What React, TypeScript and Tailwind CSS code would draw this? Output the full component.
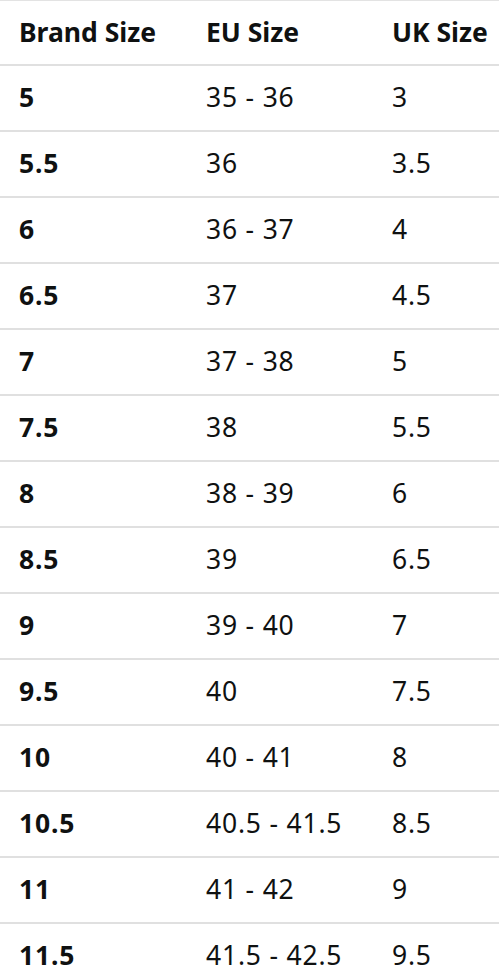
import React from "react";

const rows: [string, string, string][] = [
  ["5", "35 - 36", "3"],
  ["5.5", "36", "3.5"],
  ["6", "36 - 37", "4"],
  ["6.5", "37", "4.5"],
  ["7", "37 - 38", "5"],
  ["7.5", "38", "5.5"],
  ["8", "38 - 39", "6"],
  ["8.5", "39", "6.5"],
  ["9", "39 - 40", "7"],
  ["9.5", "40", "7.5"],
  ["10", "40 - 41", "8"],
  ["10.5", "40.5 - 41.5", "8.5"],
  ["11", "41 - 42", "9"],
  ["11.5", "41.5 - 42.5", "9.5"],
];

export default function App() {
  return (
    <div
      className="w-[499px] h-[980px] overflow-hidden bg-white text-[#0f1111]"
      style={{ fontFamily: '"Noto Sans", "Liberation Sans", sans-serif' }}
    >
      <div className="border-t border-[#e3e3e3]">
        <div className="grid grid-cols-[187px_186px_1fr] h-[65px] items-center border-b-2 border-[#e0e0e0] text-[26.5px] font-bold pl-[19px]">
          <div>Brand Size</div>
          <div>EU Size</div>
          <div>UK Size</div>
        </div>
        {rows.map(([b, eu, uk]) => (
          <div
            key={b}
            className="grid grid-cols-[187px_186px_1fr] h-[66px] items-center border-b-2 border-[#e0e0e0] text-[26.5px] tracking-[0.8px] pl-[19px]"
          >
            <div className="font-bold">{b}</div>
            <div>{eu}</div>
            <div>{uk}</div>
          </div>
        ))}
      </div>
    </div>
  );
}
